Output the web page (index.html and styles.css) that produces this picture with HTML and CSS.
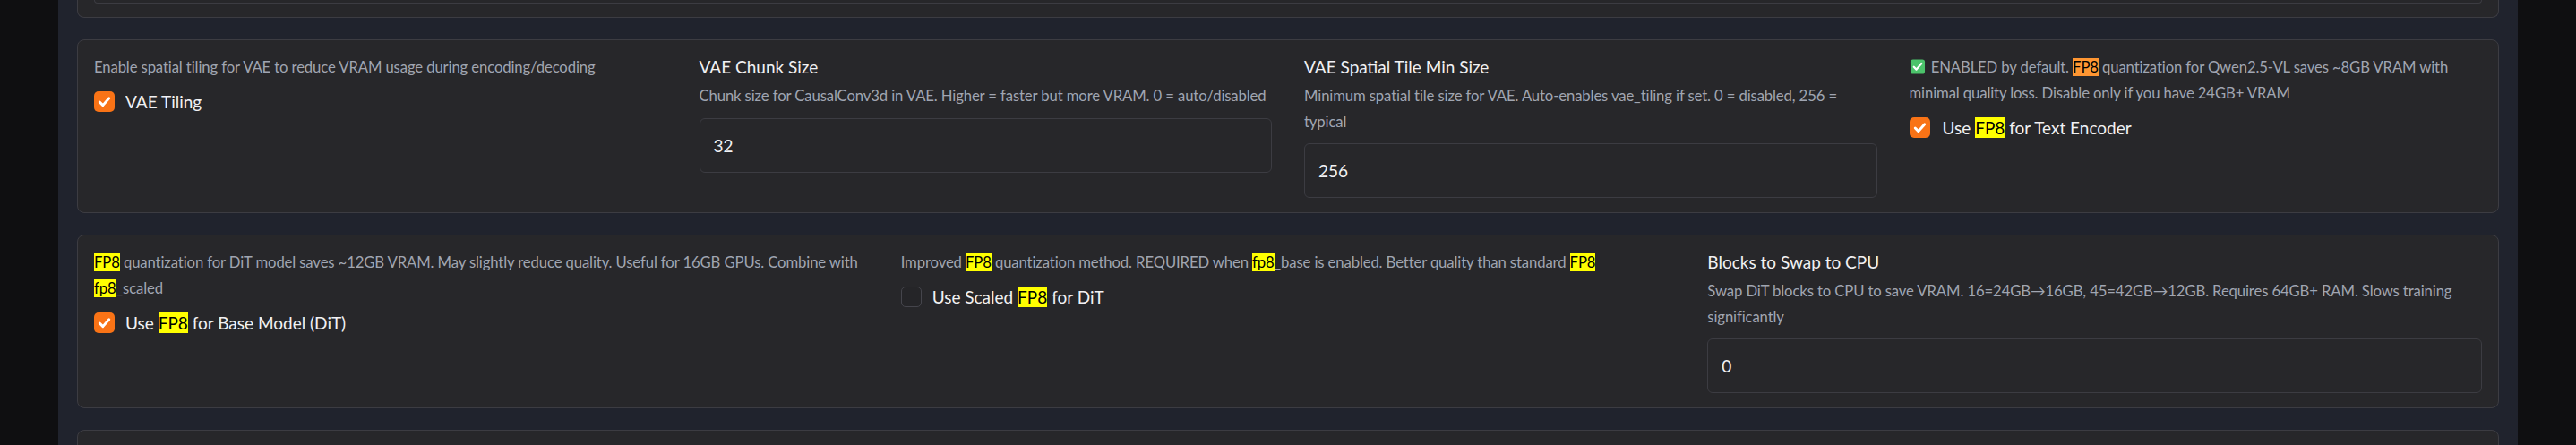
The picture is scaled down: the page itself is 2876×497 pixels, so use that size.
FILE: index.html
```html
<!DOCTYPE html>
<html lang="en">
<head>
<meta charset="utf-8">
<title>Training settings</title>
<link rel="stylesheet" href="styles.css">
</head>
<body>
<div class="page">
  <div class="card card-stub"><div class="stub-inner"></div></div>

  <div class="card">
    <div class="grid cols-4">
      <div class="field">
        <p class="info">Enable spatial tiling for VAE to reduce VRAM usage during encoding/decoding</p>
        <div class="check">
          <span class="box on"><svg viewBox="0 0 24 24" width="23" height="23"><path d="M6.5 12.5l3.8 3.8 7.2-8.2" fill="none" stroke="#fff" stroke-width="3" stroke-linecap="round" stroke-linejoin="round"/></svg></span>
          <span class="check-label">VAE Tiling</span>
        </div>
      </div>
      <div class="field">
        <div class="label">VAE Chunk Size</div>
        <p class="info">Chunk size for CausalConv3d in VAE. Higher = faster but more VRAM. 0 = auto/disabled</p>
        <div class="input">32</div>
      </div>
      <div class="field">
        <div class="label">VAE Spatial Tile Min Size</div>
        <p class="info">Minimum spatial tile size for VAE. Auto-enables vae_tiling if set. 0 = disabled, 256 = typical</p>
        <div class="input">256</div>
      </div>
      <div class="field">
        <p class="info"><span class="emoji"><svg viewBox="0 0 18 18" width="18" height="17"><rect x="0.5" y="0.5" width="17" height="17" rx="3" fill="#4cc36b"/><path d="M4.5 9.3l3 3 6-7" fill="none" stroke="#fff" stroke-width="2.4" stroke-linecap="round" stroke-linejoin="round"/></svg></span> ENABLED by default. <mark class="cur">FP8</mark> quantization for Qwen2.5-VL saves ~8GB VRAM with minimal quality loss. Disable only if you have 24GB+ VRAM</p>
        <div class="check">
          <span class="box on"><svg viewBox="0 0 24 24" width="23" height="23"><path d="M6.5 12.5l3.8 3.8 7.2-8.2" fill="none" stroke="#fff" stroke-width="3" stroke-linecap="round" stroke-linejoin="round"/></svg></span>
          <span class="check-label wide">Use <mark>FP8</mark> for Text Encoder</span>
        </div>
      </div>
    </div>
  </div>

  <div class="card">
    <div class="grid cols-3">
      <div class="field">
        <p class="info"><mark>FP8</mark> quantization for DiT model saves ~12GB VRAM. May slightly reduce quality. Useful for 16GB GPUs. Combine with <mark>fp8</mark>_scaled</p>
        <div class="check">
          <span class="box on"><svg viewBox="0 0 24 24" width="23" height="23"><path d="M6.5 12.5l3.8 3.8 7.2-8.2" fill="none" stroke="#fff" stroke-width="3" stroke-linecap="round" stroke-linejoin="round"/></svg></span>
          <span class="check-label">Use <mark>FP8</mark> for Base Model (DiT)</span>
        </div>
      </div>
      <div class="field">
        <p class="info">Improved <mark>FP8</mark> quantization method. REQUIRED when <mark>fp8</mark>_base is enabled. Better quality than standard <mark>FP8</mark></p>
        <div class="check">
          <span class="box off"></span>
          <span class="check-label">Use Scaled <mark>FP8</mark> for DiT</span>
        </div>
      </div>
      <div class="field">
        <div class="label">Blocks to Swap to CPU</div>
        <p class="info">Swap DiT blocks to CPU to save VRAM. 16=24GB→16GB, 45=42GB→12GB. Requires 64GB+ RAM. Slows training significantly</p>
        <div class="input">0</div>
      </div>
    </div>
  </div>

  <div class="card card-tail"></div>
</div>
</body>
</html>
```

FILE: styles.css
```css
* { box-sizing: border-box; }

html, body {
  margin: 0;
  height: 100%;
}

body {
  background: #0f0f11;
  font-family: Lato, "Noto Sans", "DejaVu Sans", sans-serif;
  overflow: hidden;
}

.page {
  width: 2746px;
  min-height: 100%;
  margin: 0 auto;
  padding: 0 21px;
  background: #20232d;
  display: flex;
  flex-direction: column;
  gap: 24px;
}

.card {
  background: #27272a;
  border: 1px solid #3c3c42;
  border-radius: 8px;
  padding: 16px 18px;
}

.card-stub {
  height: 20px;
  border-top: none;
  border-radius: 0 0 8px 8px;
  padding: 0 18px;
}

.stub-inner {
  height: 4px;
  border: 1px solid #3c3c42;
  border-top: none;
  border-radius: 0 0 6px 6px;
}

.card-tail {
  height: 60px;
  flex: none;
}

.grid {
  display: grid;
  column-gap: 36px;
  align-items: start;
}

.cols-4 { grid-template-columns: repeat(4, minmax(0, 1fr)); }
.cols-3 { grid-template-columns: repeat(3, minmax(0, 1fr)); }

.field {
  display: flex;
  flex-direction: column;
}

.label {
  font-size: 19px;
  line-height: 28px;
  color: #f1f1f3;
  margin-bottom: 4px;
}

.info {
  margin: 0 0 10px;
  font-size: 16.7px;
  letter-spacing: -0.12px;
  line-height: 28.5px;
  color: #a0a5b1;
}

.input {
  height: 61px;
  border: 1px solid #3c3c42;
  border-radius: 6px;
  background: #27272a;
  padding: 0 15px;
  display: flex;
  align-items: center;
  font-size: 19px;
  color: #f1f1f3;
}

.check {
  display: flex;
  align-items: center;
  gap: 12px;
  height: 28px;
}

.box {
  width: 23px;
  height: 23px;
  border-radius: 5px;
  flex: none;
  display: block;
}

.box svg { display: block; }

.box.on { background: #f97316; }

.box.off {
  border: 1px solid #45454c;
  background: #252528;
}

.check-label {
  font-size: 19px;
  color: #f1f1f3;
}

.check-label.wide { margin-left: 2px; }

mark {
  background: #ffff00;
  color: #000;
}

mark.cur { background: #ff9632; }

.emoji {
  display: inline-block;
  vertical-align: -2px;
  margin-right: 2px;
}

.emoji svg { display: block; }
```
